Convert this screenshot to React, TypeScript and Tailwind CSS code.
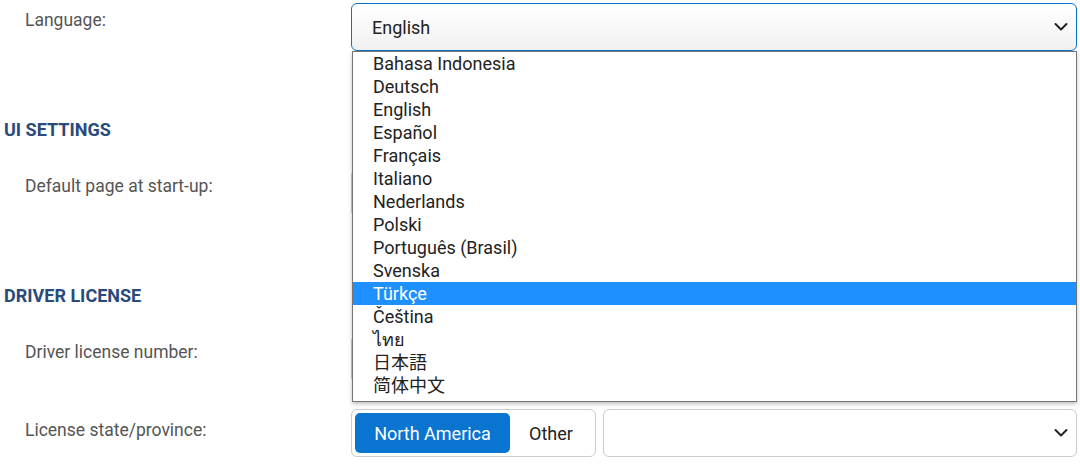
import React from "react";

const langs = ["Bahasa Indonesia","Deutsch","English","Español","Français","Italiano","Nederlands","Polski","Português (Brasil)","Svenska","Türkçe","Čeština","ไทย","日本語","简体中文"];

const Chevron = () => (
  <svg width="14" height="9" viewBox="0 0 14 9" className="absolute right-[8px] top-1/2 -translate-y-1/2">
    <path d="M1.5 1.5 L7 7 L12.5 1.5" fill="none" stroke="#222" strokeWidth="2" strokeLinecap="round" strokeLinejoin="round" />
  </svg>
);

function Row({ label, children, h = "h-[66px]" }: { label: string; children: React.ReactNode; h?: string }) {
  return (
    <div className={`flex ${h}`}>
      <div className="w-[351px] pl-[25px] pt-[4px] text-[17.5px] text-[#555]">{label}</div>
      <div className="flex-1 pr-[3px]">{children}</div>
    </div>
  );
}

const Box = ({ children, cls = "" }: { children?: React.ReactNode; cls?: string }) => (
  <div className={`relative h-[48px] rounded-[6px] border border-[#ccc] bg-white ${cls}`}>{children}</div>
);

export default function App() {
  return (
    <div className="relative w-[1080px] h-[465px] overflow-hidden bg-white" style={{ fontFamily: "Roboto, 'Noto Sans CJK JP', sans-serif" }}>
      <div className="pt-[3px]">
        <Row label="Language:" h="h-[99px]">
          <div className="relative h-[48px] rounded-[6px] border border-[#0a74d1] bg-gradient-to-b from-white to-[#f1f1f1] flex items-center pl-[20px] text-[18px] text-[#222]">
            English
            <Chevron />
          </div>
        </Row>
        <div className="h-[67px] pl-[4px] pt-[14px] text-[18px] font-bold text-[#2a4a7b]">UI SETTINGS</div>
        <Row label="Default page at start-up:" h="h-[113px]">
          <Box />
        </Row>
        <div className="h-[53px] pl-[4px] text-[18px] font-bold text-[#2a4a7b]">DRIVER LICENSE</div>
        <Row label="Driver license number:" h="h-[74px]">
          <Box />
        </Row>
        <div className="flex h-[48px]">
          <div className="w-[351px] pl-[25px] pt-[8px] text-[17.5px] text-[#555]">License state/province:</div>
          <div className="flex flex-1 gap-[7px] pr-[3px]">
            <div className="flex w-[245px] h-[48px] items-center rounded-[6px] border border-[#ccc] p-[3px]">
              <div className="h-[40px] w-[155px] rounded-[5px] bg-[#0a74d1] text-white flex items-center justify-center text-[18px]">North America</div>
              <div className="flex-1 flex items-center justify-center text-[18px] text-[#222]">Other</div>
            </div>
            <Box cls="flex-1"><Chevron /></Box>
          </div>
        </div>
      </div>
      <div className="absolute left-[352px] top-[51px] w-[725px] h-[351px] border border-[#767676] bg-white shadow-[0_2px_4px_rgba(0,0,0,0.25)]">
        {langs.map((l) => (
          <div key={l} className={`h-[23px] leading-[23px] pl-[20px] text-[18px] ${l === "Türkçe" ? "bg-[#1e90ff] text-white" : "text-[#222]"}`}>{l}</div>
        ))}
      </div>
    </div>
  );
}
